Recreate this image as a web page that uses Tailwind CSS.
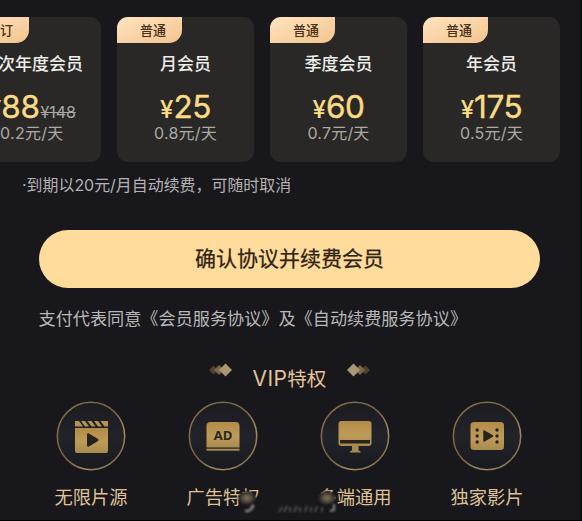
<!DOCTYPE html>
<html lang="zh-CN">
<head>
<meta charset="utf-8">
<title>VIP会员</title>
<script src="https://cdn.jsdelivr.net/npm/@tailwindcss/browser@4"></script>
</head>
<body class="bg-[#18171b]">
<main class="relative flex h-[521px] w-[582px] flex-col overflow-hidden border-b border-black bg-[#18171b] pt-[17px] font-['Inter','Noto_Sans_CJK_SC',sans-serif] whitespace-nowrap">

  <!-- Membership plans -->
  <section class="-ml-9 flex shrink-0 gap-4">
    <article class="flex h-[145px] w-[137px] shrink-0 flex-col items-center overflow-hidden rounded-[11px] bg-[#292826]">
      <div class="flex h-[26px] w-[65px] self-start rounded-br-[13px] bg-linear-to-br from-[#ffe4c1] to-[#f4c48d] pl-[23px] text-[13px] leading-[27px] font-medium text-[#493019]">预订</div>
      <h2 class="mt-[9px] w-[119px] self-start pl-[14px] text-[17px] leading-[25px] font-medium text-[#eeeeec]"><span class="ml-[3px]">首次年度会员</span></h2>
      <div class="mt-[14px] flex h-[32px] w-full items-baseline pl-[24px] leading-[32px] text-[#fbdc82]"><span class="text-[24px] font-medium">¥</span><span class="text-[31.5px] tracking-[-0.4px] [-webkit-text-stroke:0.4px_#fbdc82]">88</span><span class="ml-[1px] text-[16px] tracking-[-0.1px] text-[#aaa9a5] line-through">¥148</span></div>
      <div class="-mt-[2px] w-full pl-[36px] text-[16px] leading-[24px] tracking-[0.3px] text-[#aaa9a6]">0.2元/天</div>
    </article>
    <article class="flex h-[145px] w-[137px] shrink-0 flex-col items-center overflow-hidden rounded-[11px] bg-[#292826]">
      <div class="h-[26px] w-[65px] self-start rounded-br-[13px] bg-linear-to-br from-[#ffe4c1] to-[#f4c48d] pl-[23px] text-[13px] leading-[27px] font-medium text-[#493019]">普通</div>
      <h2 class="mt-[9px] text-[17px] leading-[25px] font-medium text-[#eeeeec]">月会员</h2>
      <div class="mt-[14px] flex h-[32px] items-baseline leading-[32px] text-[#fbdc82]"><span class="text-[24px] font-medium">¥</span><span class="text-[31.5px] tracking-[-0.4px] [-webkit-text-stroke:0.4px_#fbdc82]">25</span></div>
      <div class="-mt-[2px] text-[16px] leading-[24px] tracking-[0.2px] text-[#aaa9a6]">0.8元/天</div>
    </article>
    <article class="flex h-[145px] w-[137px] shrink-0 flex-col items-center overflow-hidden rounded-[11px] bg-[#292826]">
      <div class="h-[26px] w-[65px] self-start rounded-br-[13px] bg-linear-to-br from-[#ffe4c1] to-[#f4c48d] pl-[23px] text-[13px] leading-[27px] font-medium text-[#493019]">普通</div>
      <h2 class="mt-[9px] text-[17px] leading-[25px] font-medium text-[#eeeeec]">季度会员</h2>
      <div class="mt-[14px] flex h-[32px] items-baseline leading-[32px] text-[#fbdc82]"><span class="text-[24px] font-medium">¥</span><span class="text-[31.5px] tracking-[-0.4px] [-webkit-text-stroke:0.4px_#fbdc82]">60</span></div>
      <div class="-mt-[2px] text-[16px] leading-[24px] tracking-[0.2px] text-[#aaa9a6]">0.7元/天</div>
    </article>
    <article class="flex h-[145px] w-[137px] shrink-0 flex-col items-center overflow-hidden rounded-[11px] bg-[#292826]">
      <div class="h-[26px] w-[65px] self-start rounded-br-[13px] bg-linear-to-br from-[#ffe4c1] to-[#f4c48d] pl-[23px] text-[13px] leading-[27px] font-medium text-[#493019]">普通</div>
      <h2 class="mt-[9px] text-[17px] leading-[25px] font-medium text-[#eeeeec]">年会员</h2>
      <div class="mt-[14px] flex h-[32px] items-baseline leading-[32px] text-[#fbdc82]"><span class="text-[24px] font-medium">¥</span><span class="text-[31.5px] tracking-[-0.4px] [-webkit-text-stroke:0.4px_#fbdc82]">175</span></div>
      <div class="-mt-[2px] text-[16px] leading-[24px] tracking-[0.2px] text-[#aaa9a6]">0.5元/天</div>
    </article>
  </section>

  <p class="mt-[12px] ml-[22px] h-[24px] text-[15.95px] leading-[24px] text-[#b4b3b4]">·到期以20元/月自动续费，可随时取消</p>

  <button class="mt-[32px] ml-[39px] h-[58px] w-[501px] shrink-0 rounded-full bg-[#ffdc9b] text-[21px] leading-[58px] text-[#302313] [-webkit-text-stroke:0.25px_#302313]">确认协议并续费会员</button>

  <p class="mt-[18px] ml-[38.5px] h-[26px] text-[17.15px] leading-[26px] text-[#b9b8b9]">支付代表同意《会员服务协议》及《自动续费服务协议》</p>

  <div class="mt-[30px] ml-[208px] flex h-[39px] w-[163px] shrink-0 items-start justify-between">
    <svg class="mt-[1px]" width="25" height="14" viewBox="0 0 25 14"><path d="M1 7l4.5-4.5L10 7l-4.500 4.500z" fill="#4e422c"/><path d="M6 7l5-5 5 5-5 5z" fill="#79684a"/><path d="M11 7l6.500-6.500L24 7l-6.500 6.500z" fill="#aa9870"/></svg>
    <h2 class="mt-[2px] text-[19.5px] leading-[30px] text-[#e4c397]"><span class="text-[21px] tracking-[0.4px]">VIP</span>特权</h2>
    <svg class="mt-[1px]" width="25" height="14" viewBox="0 0 25 14"><path d="M15 7l4.500-4.500L24 7l-4.500 4.500z" fill="#4e422c"/><path d="M9 7l5-5 5 5-5 5z" fill="#79684a"/><path d="M1 7L7.500.5 14 7l-6.500 6.500z" fill="#aa9870"/></svg>
  </div>

  <!-- Privileges -->
  <section class="ml-[25px] grid w-[528px] shrink-0 grid-cols-4 text-[18.3px] leading-[28px] text-[#dfc296]">
    <div class="flex flex-col items-center gap-[12px]">
      <svg width="70" height="70" viewBox="0 0 70 70">
        <defs>
          <linearGradient id="gold" x1="0" y1="0" x2="0" y2="1"><stop stop-color="#b08c48"/><stop offset=".55" stop-color="#bf9b57"/><stop offset="1" stop-color="#a88b51"/></linearGradient>
          <linearGradient id="disc" x1="0" y1="0" x2="0" y2="1"><stop stop-color="#1b1b20"/><stop offset=".5" stop-color="#222329"/><stop offset="1" stop-color="#191a1f"/></linearGradient>
          <linearGradient id="ring" x1="0" y1="0" x2="1" y2="1"><stop stop-color="#8b754e"/><stop offset=".45" stop-color="#766342"/><stop offset=".72" stop-color="#a38b60"/><stop offset="1" stop-color="#67583d"/></linearGradient>
        </defs>
        <circle cx="35" cy="35" r="33.700" fill="url(#disc)" stroke="url(#ring)" stroke-width="1.500"/>
        <path d="M19 27h33v23a2 2 0 0 1-2 2H21a2 2 0 0 1-2-2z" fill="url(#gold)"/>
        <path d="M19 20h4l4 5.500h-8zM25 20h4l4 5.500h-4zM31.500 20h4l4 5.500h-4zM38 20h4l4 5.500h-4zM44.500 20H52v5.500h-3.500z" fill="#b7924d"/>
        <path d="M31.500 33.300v11.400q0 1 1 .5l9.300-5.500q.8-.7 0-1.400l-9.300-5.500q-1-.5-1 .5z" fill="#24221e" stroke="#24221e"/>
      </svg>
      <span>无限片源</span>
    </div>
    <div class="flex flex-col items-center gap-[12px]">
      <svg width="70" height="70" viewBox="0 0 70 70">
        <circle cx="35" cy="35" r="33.700" fill="url(#disc)" stroke="url(#ring)" stroke-width="1.500"/>
        <path d="M18.500 46.500V25q0-4 4-4h25q4 0 4 4v21.500z" fill="url(#gold)"/>
        <rect x="18.500" y="47.700" width="33" height="2" fill="#a98c50"/>
        <text x="35" y="38.800" text-anchor="middle" font-family="Open Sans, sans-serif" font-weight="700" font-size="13" fill="#292621">AD</text>
      </svg>
      <span>广告特权</span>
    </div>
    <div class="flex flex-col items-center gap-[12px]">
      <svg width="70" height="70" viewBox="0 0 70 70">
        <circle cx="35" cy="35" r="33.700" fill="url(#disc)" stroke="url(#ring)" stroke-width="1.500"/>
        <rect x="18.500" y="20" width="33" height="25" rx="3" fill="url(#gold)"/>
        <path d="M20 39h30v3.500H20z" fill="#29251e"/>
        <path d="M32 45h6.500v4q0 1 2 1.200v1.300H30v-1.300q2-.2 2-1.200z" fill="#a88a4e"/>
      </svg>
      <span>多端通用</span>
    </div>
    <div class="flex flex-col items-center gap-[12px]">
      <svg width="70" height="70" viewBox="0 0 70 70">
        <circle cx="35" cy="35" r="33.700" fill="url(#disc)" stroke="url(#ring)" stroke-width="1.500"/>
        <rect x="18.500" y="21" width="33.500" height="28" rx="3.500" fill="url(#gold)"/>
        <path d="M32 30v10l8.500-5z" fill="#29251e" stroke="#29251e" stroke-width="1.500" stroke-linejoin="round"/>
        <g fill="#29251e"><circle cx="25.200" cy="29" r="1.700"/><circle cx="25.200" cy="35" r="1.700"/><circle cx="25.200" cy="41" r="1.700"/><circle cx="45" cy="29" r="1.700"/><circle cx="45" cy="35" r="1.700"/><circle cx="45" cy="41" r="1.700"/></g>
      </svg>
      <span>独家影片</span>
    </div>
  </section>

  <!-- Smudged band over the middle labels -->
  <svg class="absolute top-[480px] left-[225px]" width="125" height="40" viewBox="0 0 125 40">
    <defs>
      <filter id="soft" x="-30%" y="-30%" width="160%" height="160%"><feGaussianBlur stdDeviation="1.200"/></filter>
      <filter id="faint"><feGaussianBlur stdDeviation=".8"/></filter>
      <radialGradient id="smear"><stop stop-color="#8a785b"/><stop offset=".55" stop-color="#51483b"/><stop offset="1" stop-color="#18171b"/></radialGradient>
    </defs>
    <g filter="url(#soft)">
      <path d="M15 18h20v10H15zM92 18h18v10H92z" fill="#18171b"/>
      <ellipse cx="22" cy="18" rx="9" ry="7" fill="url(#smear)"/>
      <ellipse cx="102" cy="18" rx="9" ry="7" fill="url(#smear)"/>
      <path d="M20 31q7 1 8-6" fill="none" stroke="#8e8e91" stroke-width="2"/>
    </g>
    <g fill="none" filter="url(#faint)">
      <path d="M54 32l3-5m2 5l3-6m3 6v-5m4 5l3-6m3 6v-5m5 5l2-6m4 6v-5m4 5l2-6m5 6v-5" stroke="#77777a" stroke-width="1.800" opacity=".6"/>
      <path d="M105 31l4-1v-6" stroke="#a5a5a6" stroke-width="2" opacity=".8"/>
    </g>
  </svg>
  <div class="absolute top-0 right-0 h-full w-[3px] bg-linear-to-r from-transparent to-[#09090a]"></div>
</main>
</body>
</html>
